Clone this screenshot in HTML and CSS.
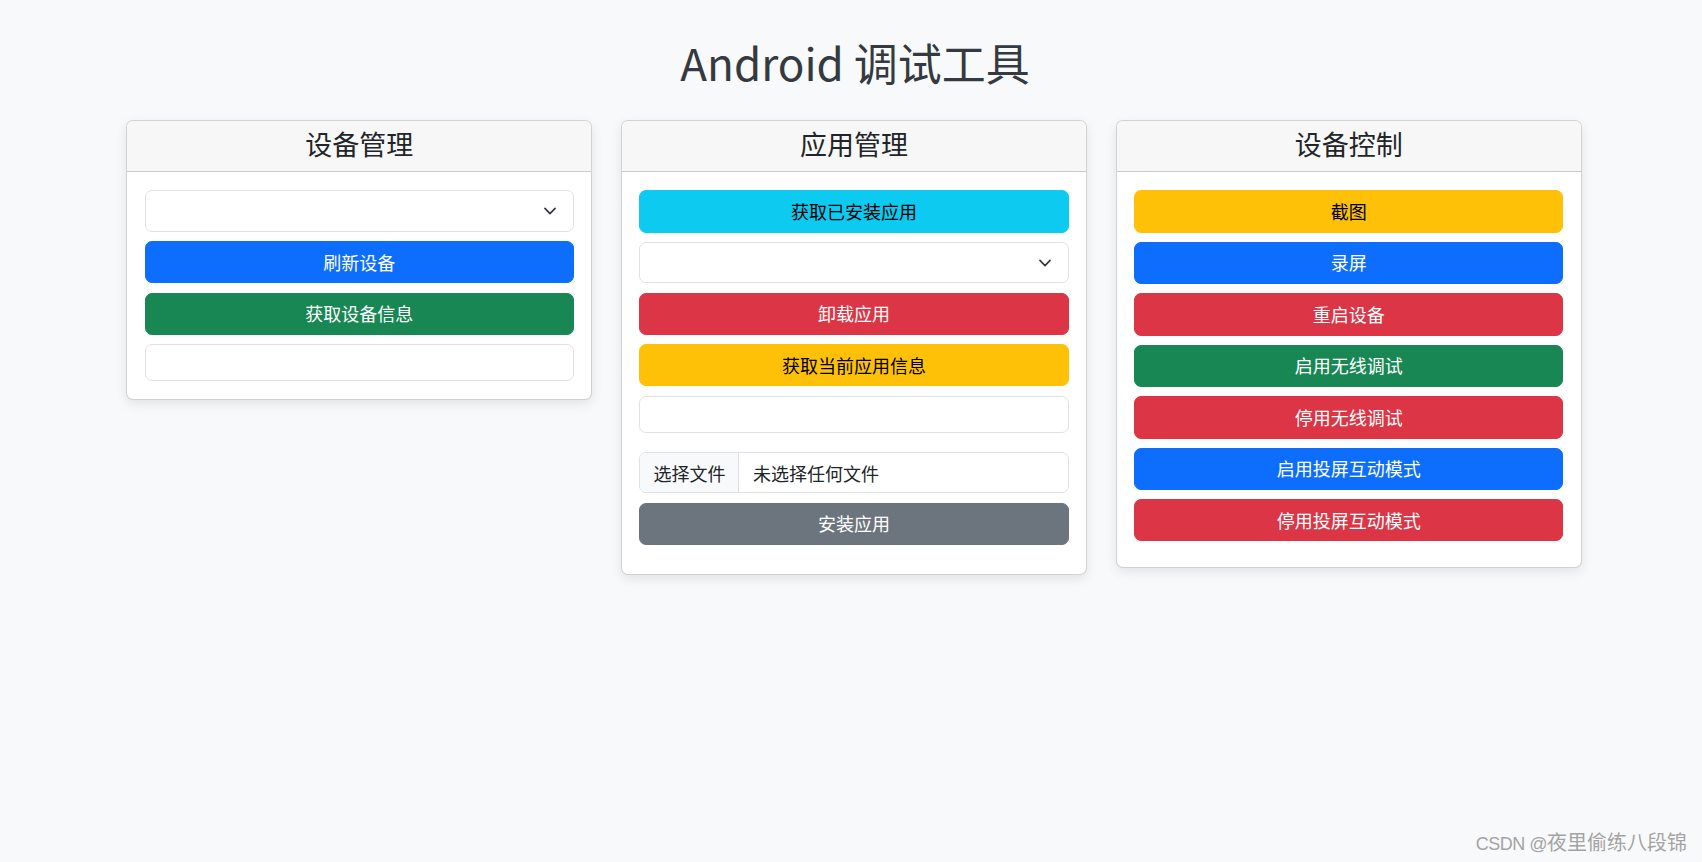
FILE: index.html
```html
<!DOCTYPE html>
<html lang="zh-CN">
<head>
<meta charset="utf-8">
<title>Android 调试工具</title>
<link rel="stylesheet" href="styles.css">
</head>
<body>
<div class="page">
  <h1 class="page-title">Android 调试工具</h1>
  <div class="cards">
    <section class="card card-device">
      <div class="card-header"><h4>设备管理</h4></div>
      <div class="card-body">
        <select class="form-select" aria-label="设备"></select>
        <button class="btn btn-primary">刷新设备</button>
        <button class="btn btn-success">获取设备信息</button>
        <div class="output-box"></div>
      </div>
    </section>

    <section class="card card-app">
      <div class="card-header"><h4>应用管理</h4></div>
      <div class="card-body">
        <button class="btn btn-info">获取已安装应用</button>
        <select class="form-select" aria-label="应用"></select>
        <button class="btn btn-danger">卸载应用</button>
        <button class="btn btn-warning">获取当前应用信息</button>
        <div class="output-box output-box-spaced"></div>
        <label class="file-input">
          <span class="file-button">选择文件</span>
          <span class="file-name">未选择任何文件</span>
        </label>
        <button class="btn btn-secondary">安装应用</button>
      </div>
    </section>

    <section class="card card-control">
      <div class="card-header"><h4>设备控制</h4></div>
      <div class="card-body">
        <button class="btn btn-warning">截图</button>
        <button class="btn btn-primary">录屏</button>
        <button class="btn btn-danger">重启设备</button>
        <button class="btn btn-success">启用无线调试</button>
        <button class="btn btn-danger">停用无线调试</button>
        <button class="btn btn-primary">启用投屏互动模式</button>
        <button class="btn btn-danger">停用投屏互动模式</button>
      </div>
    </section>
  </div>
</div>
<div class="watermark"><span class="wm-latin">CSDN @</span>夜里偷练八段锦</div>
</body>
</html>
```

FILE: styles.css
```css
* { box-sizing: border-box; }

html, body {
  margin: 0;
  padding: 0;
  height: 100%;
}

body {
  background: #f8f9fa;
  color: #212529;
  font-family: "Noto Sans CJK SC", "Noto Sans", sans-serif;
  font-size: 18px;
  overflow: hidden;
  position: relative;
}

.page {
  margin: 0 120px 0 126px;
  padding-top: 36px;
}

.page-title {
  margin: 0;
  font-size: 44px;
  font-weight: 400;
  line-height: 1.2;
  color: #343a40;
  text-align: center;
  padding-left: 2px;
}

.cards {
  display: grid;
  grid-template-columns: repeat(3, 1fr);
  column-gap: 28.5px;
  align-items: start;
  margin-top: 31.2px;
}

.card {
  background: #fff;
  border: 1px solid rgba(0, 0, 0, 0.175);
  border-radius: 7px;
  box-shadow: 0 4px 12px rgba(0, 0, 0, 0.09);
  overflow: hidden;
}

.card-header {
  background: #f7f7f7;
  border-bottom: 1px solid rgba(0, 0, 0, 0.175);
  padding: 7px 18px 10.6px;
  text-align: center;
}

.card-header h4 {
  margin: 0;
  font-size: 27px;
  font-weight: 400;
  line-height: 1.2;
  color: #212529;
}

.card-body {
  display: flex;
  flex-direction: column;
  gap: 9.2px;
  padding: 18.3px 17.6px 17.6px;
}

.card-app .card-body { padding-bottom: 29px; }
.card-control .card-body { padding-bottom: 26px; }

.form-select {
  display: block;
  width: 100%;
  height: 41.6px;
  margin: 0;
  padding: 0 40px 0 13.5px;
  font: inherit;
  background-color: #fff;
  background-image: url("data:image/svg+xml,%3csvg xmlns='http://www.w3.org/2000/svg' viewBox='0 0 16 16'%3e%3cpath fill='none' stroke='%23343a40' stroke-linecap='round' stroke-linejoin='round' stroke-width='2' d='m2 5 6 6 6-6'/%3e%3c/svg%3e");
  background-repeat: no-repeat;
  background-position: right 13.5px center;
  background-size: 18px 13.5px;
  border: 1px solid #dee2e6;
  border-radius: 7px;
  appearance: none;
  -webkit-appearance: none;
}

.btn {
  display: flex;
  align-items: center;
  justify-content: center;
  width: 100%;
  height: 42.3px;
  margin: 0;
  padding: 0 13.5px;
  font: inherit;
  font-size: 18px;
  line-height: 1.5;
  border: 1px solid transparent;
  border-radius: 7px;
  cursor: pointer;
}

.btn-primary { background: #0d6efd; border-color: #0d6efd; color: #fff; }
.btn-success { background: #198754; border-color: #198754; color: #fff; }
.btn-danger { background: #dc3545; border-color: #dc3545; color: #fff; }
.btn-secondary { background: #6c757d; border-color: #6c757d; color: #fff; }
.btn-warning { background: #ffc107; border-color: #ffc107; color: #000; }
.btn-info { background: #0dcaf0; border-color: #0dcaf0; color: #000; }

.output-box {
  height: 37.4px;
  background: #fff;
  border: 1px solid #dee2e6;
  border-radius: 7px;
}

.output-box-spaced { margin-bottom: 10px; }

.file-input {
  display: flex;
  align-items: stretch;
  height: 41px;
  background: #fff;
  border: 1px solid #dee2e6;
  border-radius: 7px;
  overflow: hidden;
  cursor: pointer;
}

.file-button {
  display: flex;
  align-items: center;
  width: 99px;
  padding-left: 13px;
  background: #f8f9fa;
  border-right: 1px solid #dee2e6;
  color: #212529;
}

.file-name {
  display: flex;
  align-items: center;
  padding-left: 13.5px;
  color: #212529;
}

.btn-secondary { margin-top: 0.5px; }

.watermark {
  position: absolute;
  right: 15px;
  bottom: 6px;
  font-size: 20px;
  line-height: 1.2;
  color: #a3a3a3;
  text-shadow: 0 0 1px #fff;
  white-space: nowrap;
}

.wm-latin {
  font-family: "Liberation Sans", sans-serif;
  font-size: 18px;
  letter-spacing: -0.5px;
}
```
